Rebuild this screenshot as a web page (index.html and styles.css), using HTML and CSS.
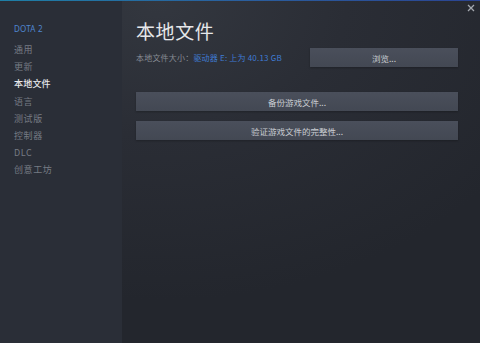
FILE: index.html
```html
<!DOCTYPE html>
<html lang="zh-CN">
<head>
<meta charset="utf-8">
<link rel="stylesheet" href="styles.css">
</head>
<body>
<div class="window">
  <div class="topline"></div>
  <div class="body">
    <nav class="sidebar">
      <div class="game">DOTA 2</div>
      <ul class="nav">
        <li>通用</li>
        <li>更新</li>
        <li class="active">本地文件</li>
        <li>语言</li>
        <li>测试版</li>
        <li>控制器</li>
        <li>DLC</li>
        <li>创意工坊</li>
      </ul>
    </nav>
    <main class="main">
      <h1 class="title">本地文件</h1>
      <div class="size-row">
        <div class="size"><span class="label">本地文件大小：</span><span class="link">驱动器 E: 上为 40.13 GB</span></div>
        <button class="btn browse">浏览...</button>
      </div>
      <div class="actions">
        <button class="btn wide">备份游戏文件...</button>
        <button class="btn wide">验证游戏文件的完整性...</button>
      </div>
    </main>
  </div>
  <button class="close" aria-label="关闭">
    <svg width="8" height="8" viewBox="0 0 8 8"><path d="M1 1L7 7M7 1L1 7" stroke="#a4a8af" stroke-width="1.3"/></svg>
  </button>
</div>
</body>
</html>
```
FILE: styles.css
```css
* { box-sizing: border-box; }
html, body { margin: 0; padding: 0; }
body {
  width: 480px;
  height: 343px;
  overflow: hidden;
  background: #23262e;
  font-family: "Noto Sans CJK SC", "Noto Sans", sans-serif;
}
.window {
  position: relative;
  width: 480px;
  height: 343px;
  display: flex;
  flex-direction: column;
}
.topline {
  height: 1px;
  flex: none;
  background: linear-gradient(90deg, #1e7fa6 0%, #2a5f9e 50%, #2b4492 100%);
}
.body {
  flex: 1;
  display: flex;
}
.sidebar {
  width: 122px;
  flex: none;
  background: #2a2e37;
  padding: 22px 0 0 14px;
}
.game {
  font-family: "Noto Sans", sans-serif;
  font-size: 8px;
  line-height: 12px;
  color: #4f86d0;
  letter-spacing: 0.2px;
  margin-bottom: 6px;
}
.nav {
  list-style: none;
  margin: 0;
  padding: 0;
}
.nav li {
  font-size: 9px;
  line-height: 17.2px;
  color: #767b84;
  letter-spacing: 0.6px;
}
.nav li.active {
  color: #e6e8eb;
  font-weight: 500;
  letter-spacing: 0.2px;
}
.main {
  flex: 1;
  padding: 18px 22px 0 14px;
  background: radial-gradient(ellipse 420px 300px at 10% 0%, #33373f 0%, #2a2d35 45%, #23262d 100%);
}
.title {
  margin: 0 0 5px;
  font-size: 19px;
  line-height: 24px;
  font-weight: 400;
  color: #e6e7e9;
  letter-spacing: 0.6px;
}
.size-row {
  display: flex;
  align-items: center;
  justify-content: space-between;
  height: 19px;
}
.size {
  font-size: 8px;
  letter-spacing: 0.2px;
}
.label { color: #878c94; }
.link { color: #3f7bd3; }
.btn {
  border: none;
  margin: 0;
  padding: 0;
  height: 19px;
  background: linear-gradient(180deg, #4a4f5b 0%, #434853 100%);
  color: #c9ccd2;
  font-family: "Noto Sans CJK SC", "Noto Sans", sans-serif;
  font-size: 8.5px;
  box-shadow: 0 1px 2px rgba(0,0,0,0.25);
}
.browse { width: 148px; }
.actions {
  margin-top: 25px;
  display: flex;
  flex-direction: column;
  gap: 10px;
}
.wide { width: 100%; }
.close {
  position: absolute;
  top: 3px;
  right: 4px;
  width: 10px;
  height: 10px;
  border: none;
  background: none;
  padding: 1px;
  display: flex;
  align-items: center;
  justify-content: center;
}
```
